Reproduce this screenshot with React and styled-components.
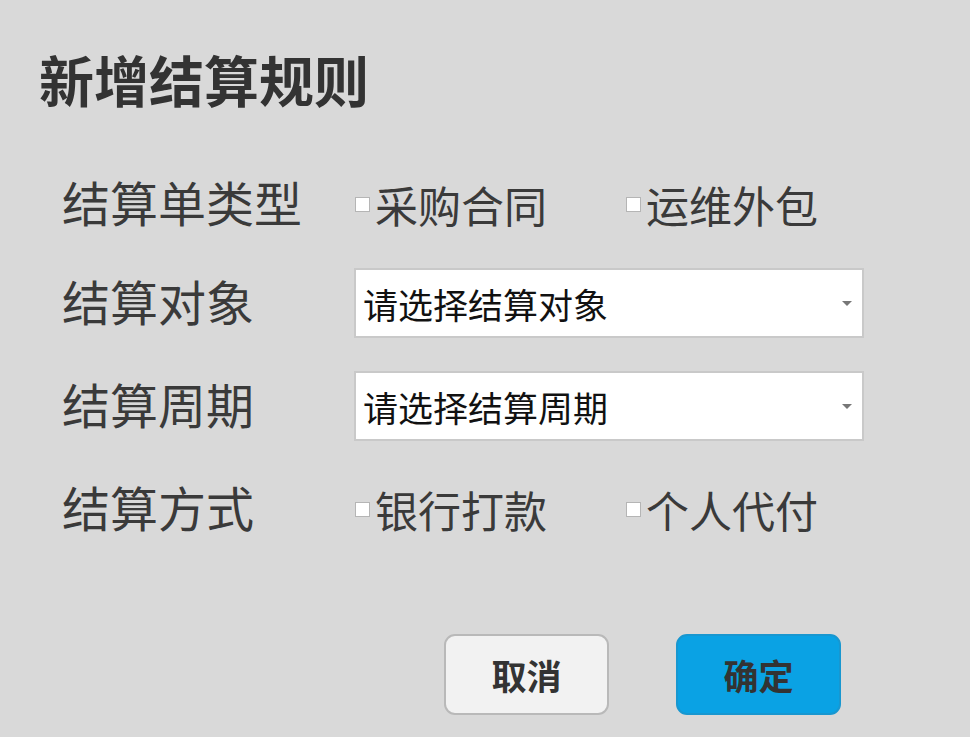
import * as React from "react";
import styled, { createGlobalStyle } from "styled-components";

const GlobalStyle = createGlobalStyle`
  html, body {
    margin: 0;
    padding: 0;
    background: #d9d9d9;
  }
  body {
    font-family: "Noto Sans CJK SC", "Noto Sans", sans-serif;
    color: #333;
  }
`;

const Styled = {
  Dialog: styled.div`
    width: 970px;
    height: 737px;
    box-sizing: border-box;
    padding: 40px 0 0 39px;
    background: #d9d9d9;
  `,
  Title: styled.h1`
    margin: 0;
    font-size: 55px;
    line-height: 76px;
    font-weight: 700;
    color: #333;
  `,
  Form: styled.div`
    display: grid;
    grid-template-columns: 292px 510px;
    grid-template-rows: 62px 70px 70px 70px;
    row-gap: 33px;
    margin-top: 57px;
    padding-left: 23px;
    align-items: center;
  `,
  Label: styled.div`
    font-size: 48px;
    line-height: 1;
    margin-top: -6px;
    color: #3a3a3a;
    white-space: nowrap;
  `,
  Options: styled.div`
    display: flex;
    align-items: center;
    gap: 78px;
  `,
  Option: styled.label`
    display: flex;
    align-items: center;
    gap: 5px;
    font-size: 43px;
    line-height: 1;
    color: #3a3a3a;
  `,
  Box: styled.span`
    width: 15px;
    height: 15px;
    margin-left: 1px;
    background: #fff;
    border: 1px solid #b5b5b5;
    box-sizing: border-box;
  `,
  Select: styled.div`
    height: 70px;
    box-sizing: border-box;
    display: flex;
    align-items: center;
    justify-content: space-between;
    padding: 0 10px 0 7px;
    background: #fff;
    border: 2px solid #c9c9c9;
    font-size: 35px;
    color: #111;
  `,
  Arrow: styled.span`
    width: 0;
    height: 0;
    border-left: 5px solid transparent;
    border-right: 5px solid transparent;
    border-top: 5px solid #777;
  `,
  Footer: styled.div`
    display: flex;
    gap: 67px;
    margin-top: 90px;
    padding-left: 405px;
  `,
  Button: styled.button`
    width: 165px;
    height: 81px;
    box-sizing: border-box;
    border-radius: 11px;
    border: 2px solid ${(p) => (p.$primary ? "#1897d0" : "#b9b9b9")};
    background: ${(p) => (p.$primary ? "#0aa2e4" : "#f2f2f2")};
    color: #333;
    font-family: inherit;
    font-size: 35px;
    font-weight: 700;
    cursor: pointer;
  `,
};

const Check = ({ children }) => (
  <Styled.Option>
    <Styled.Box />
    {children}
  </Styled.Option>
);

export default function App() {
  return (
    <>
      <GlobalStyle />
      <Styled.Dialog>
        <Styled.Title>新增结算规则</Styled.Title>
        <Styled.Form>
          <Styled.Label>结算单类型</Styled.Label>
          <Styled.Options>
            <Check>采购合同</Check>
            <Check>运维外包</Check>
          </Styled.Options>

          <Styled.Label>结算对象</Styled.Label>
          <Styled.Select>
            请选择结算对象
            <Styled.Arrow />
          </Styled.Select>

          <Styled.Label>结算周期</Styled.Label>
          <Styled.Select>
            请选择结算周期
            <Styled.Arrow />
          </Styled.Select>

          <Styled.Label>结算方式</Styled.Label>
          <Styled.Options>
            <Check>银行打款</Check>
            <Check>个人代付</Check>
          </Styled.Options>
        </Styled.Form>
        <Styled.Footer>
          <Styled.Button>取消</Styled.Button>
          <Styled.Button $primary>确定</Styled.Button>
        </Styled.Footer>
      </Styled.Dialog>
    </>
  );
}
